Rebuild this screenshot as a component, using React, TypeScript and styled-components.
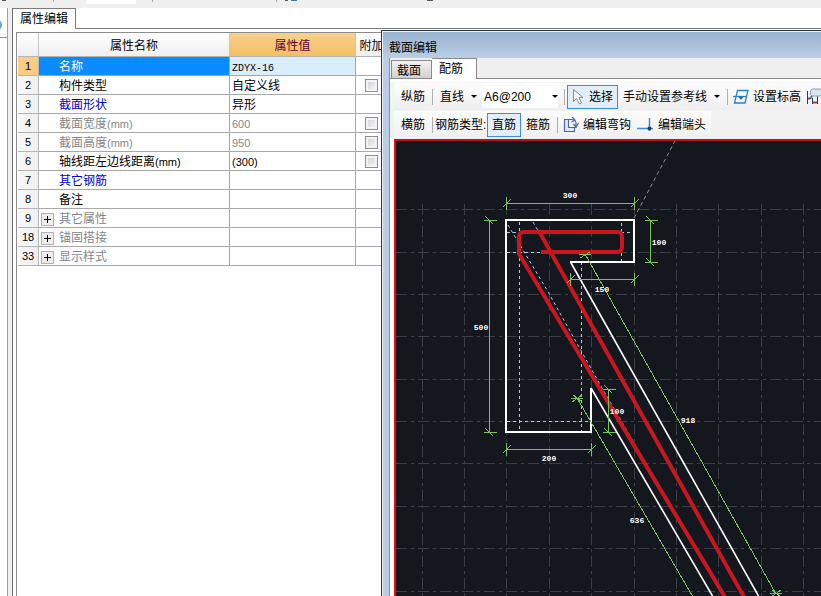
import React from "react";
import styled, { createGlobalStyle, css } from "styled-components";

const Global = createGlobalStyle`
  *, *::before, *::after { box-sizing: border-box; }
  html, body { margin: 0; background: #fff; }
  body, button, select, input {
    font-family: "Liberation Sans", "Noto Sans CJK SC", sans-serif;
    font-size: 12px;
    line-height: 16px;
    color: #000;
  }
  button { margin: 0; padding: 0; border: 0; background: none; }
`;

const Desktop = styled.div`
  position: relative;
  display: flex;
  flex-direction: column;
  height: 100vh;
  overflow: hidden;
`;

const MainToolbar = styled.header`
  flex: none;
  height: 8px;
  background: #efefef;
`;

const Workspace = styled.div`
  flex: 1;
  display: flex;
  min-height: 0;
`;

const LeftDock = styled.aside`
  flex: none;
  width: 8px;
  padding-top: 3px;
  border-right: 1px solid #a0a0a0;
  background: #fff;
`;

const DockHeader = styled.div`
  height: 27px;
  border-bottom: 1px solid #909090;
`;

const Splitter = styled.div`
  flex: none;
  width: 4px;
  background: #f0f0f0;
`;

const PropertyPanel = styled.main`
  flex: 1;
  min-width: 0;
  display: flex;
  flex-direction: column;
  border-left: 1px solid #6e6e6e;
  overflow: hidden;
`;

const PanelTabs = styled.div`
  flex: none;
  display: flex;
  height: 21px;

  &::after {
    content: "";
    flex: 1;
    border-bottom: 1px solid #7c7c7c;
  }
`;

const PanelTab = styled.button`
  padding: 0 7px;
  border-top: 1px solid #7c7c7c;
  border-right: 1px solid #7c7c7c;
`;

const TableFrame = styled.div`
  flex: 1;
  margin: 3px 0 0 3px;
  border-top: 1px solid #8c8c8c;
  border-left: 1px solid #8c8c8c;
`;

const PropertyTable = styled.table`
  width: 370px;
  margin-left: 1px;
  table-layout: fixed;
  border-collapse: separate;
  border-spacing: 0;
`;

const HeadCell = styled.th<{ $active?: boolean; $width: number }>`
  width: ${(p) => p.$width}px;
  height: 24px;
  padding: 2px 0 0;
  border-right: 1px solid #c4c4c4;
  border-bottom: 1px solid #b4b4b4;
  background: linear-gradient(#fff, #efefef);
  font-weight: 400;
  ${(p) =>
    p.$active &&
    css`
      background: linear-gradient(#f7d28a, #f2bf63);
      color: #5e0036;
    `}
`;

type Tone = "normal" | "link" | "muted";
const tones: Record<Tone, string> = { normal: "#000", link: "#0000c8", muted: "#868686" };

const IndexCell = styled.th<{ $active?: boolean }>`
  height: 19px;
  padding: 0;
  border-right: 1px solid #b4b4b4;
  border-bottom: 1px solid #b4b4b4;
  background: ${(p) => (p.$active ? "#fccb86" : "linear-gradient(90deg, #f8f8f8, #efefef)")};
  font-size: 11px;
  font-weight: 400;
`;

const Cell = styled.td<{ $tone?: Tone; $bg?: string }>`
  height: 19px;
  padding: 2px 2px 0;
  border-right: 1px solid #a8a8a8;
  border-bottom: 1px solid #a8a8a8;
  background: ${(p) => p.$bg ?? "#fff"};
  color: ${(p) => tones[p.$tone ?? "normal"]};
  white-space: nowrap;
`;

const NameLine = styled.div<{ $selected?: boolean }>`
  display: grid;
  grid-template-columns: 18px auto;
  align-items: center;
  justify-content: start;
  color: ${(p) => (p.$selected ? "#fff" : "inherit")};
`;

const Latin = styled.span<{ $mono?: boolean }>`
  font-family: ${(p) => (p.$mono ? '"Liberation Mono", monospace' : '"Liberation Sans", sans-serif')};
  font-size: ${(p) => (p.$mono ? 10 : 11)}px;
  line-height: 10px;
`;

const Expander = styled.button`
  display: grid;
  width: 13px;
  height: 13px;
  place-items: center;
  border: 1px solid #b0b0b0;
  background: #eee;
`;

const CheckCell = styled(Cell)`
  padding: 0;
`;

const Check = styled.input`
  appearance: none;
  display: block;
  width: 13px;
  height: 13px;
  margin: 0 auto;
  border: 1px solid #8e8f8f;
  background: linear-gradient(135deg, #d0d0d0, #f8f8f8);
  box-shadow: inset 0 0 0 2px #f4f4f4;
`;

const ToolWindow = styled.section`
  position: absolute;
  left: 381px;
  top: 30px;
  right: 0;
  bottom: 0;
  display: flex;
  flex-direction: column;
  border-top: 1px solid #2c3440;
  border-left: 1px solid #2c3440;
  background: #b9cde5;
  box-shadow: inset 1px 1px 0 #eef4fa;
`;

const WindowTitle = styled.h1`
  flex: none;
  height: 26px;
  margin: 1px 0 0 1px;
  padding: 8px 6px 0;
  background: linear-gradient(#98b2d0, #bacee6);
  font-size: 12px;
  font-weight: 400;
`;

const WindowBody = styled.div`
  flex: 1;
  display: flex;
  flex-direction: column;
  min-height: 0;
  margin-left: 7px;
  border-left: 1px solid #8a929c;
  background: #fff;
`;

const WindowTabs = styled.div`
  flex: none;
  display: flex;
  align-items: stretch;
  height: 21px;
  background: #efefef;

  &::before,
  &::after {
    content: "";
    width: 1px;
    border-bottom: 1px solid #8a8a8a;
  }
  &::after {
    flex: 1;
  }
`;

const WindowTab = styled.button<{ $active?: boolean }>`
  border: 1px solid #8a8a8a;
  ${(p) =>
    p.$active
      ? css`
          padding: 0 13px 0 7px;
          border-left: 0;
          border-bottom: 0;
          background: #fff;
        `
      : css`
          margin-top: 2px;
          padding: 2px 10px 0 5px;
          background: linear-gradient(#f2f2f2, #d0d0d0);
        `}
`;

const Toolbars = styled.div`
  flex: none;
  display: flex;
  flex-direction: column;
  gap: 1px;
  padding: 4px 0 1px 4px;
  overflow: hidden;
  background: linear-gradient(#fff 0 3px, #f6f6f6 3px, #efefef);
`;

const Toolbar = styled.div`
  display: flex;
  align-items: center;
  align-self: flex-start;
  height: 27px;
  padding: 0 2px;
  background: linear-gradient(#fcfcfc, #efefef);
  white-space: nowrap;
`;

const Tool = styled.button<{ $pressed?: boolean; $tight?: boolean; $gap?: number }>`
  flex: none;
  display: flex;
  align-items: center;
  gap: ${(p) => p.$gap ?? 4}px;
  height: 24px;
  padding: 0 ${(p) => (p.$tight ? 2 : 4)}px;
  border: 1px solid ${(p) => (p.$pressed ? "#3a8ee0" : "transparent")};
  background: ${(p) => (p.$pressed ? "#e2effa" : "transparent")};
  white-space: nowrap;
`;

const Divider = styled.span`
  flex: none;
  width: 1px;
  height: 16px;
  margin: 0 2px;
  background: #b0b0b0;
`;

const ToolLabel = styled.span`
  width: 52px;
`;

const Arrow = styled.i`
  flex: none;
  border: solid transparent;
  border-width: 3px 3px 0;
  border-top-color: #000;
`;

const ComboBox = styled.label`
  flex: none;
  display: flex;
  align-items: center;
  width: 76px;
  height: 22px;
  margin-right: 4px;
  background: #fff;
`;

const Combo = styled.select`
  appearance: none;
  flex: 1;
  min-width: 0;
  height: 22px;
  padding: 0 2px;
  border: 0;
  background: none;
`;

const Viewport = styled.div`
  flex: 1;
  min-height: 0;
  margin-left: 4px;
  border-top: 2px solid #b8141c;
  border-left: 2px solid #e01010;
  background: #14171e;
  overflow: hidden;
`;

const Drawing = styled.svg`
  display: block;
  width: 100%;
  height: 100%;
`;

const DimText = styled.text`
  fill: #fff;
  font: bold 8px "Liberation Mono", monospace;
  text-anchor: middle;
`;

const CursorIcon = () => (
  <svg width="13" height="18" viewBox="0 0 13 18">
    <path d="M1.5 1.5v12l3-3 3 5.500 2-1-2.500-5.500h4z" fill="#f4f6f9" stroke="#8d8a8c" />
  </svg>
);

const LevelIcon = () => (
  <svg width="16" height="16" viewBox="0 0 16 16" fill="none" stroke="#2f7fc4" strokeWidth="1.300">
    <path d="M4.500 1.500h10.500l-3 12.500h-10.500z" fill="#f5faff" />
    <path d="M0 7.500h13" />
    <path d="M5 7.500h6l-3 3.500z" fill="#2c6fb0" stroke="none" />
  </svg>
);

const HookIcon = () => (
  <svg width="16" height="16" viewBox="0 0 16 16" fill="none" stroke="#4a68a8" strokeWidth="1.200">
    <path d="M1.500 2.500h4v8h6v4h-10z" fill="#dfeaf8" />
    <path d="M5.500 2.500h3q4 0 4.500 3.500v4.500h-2" />
    <path d="M9 0l3 3-3.500 2M10.500 7l2.500 3 2.500-4" />
  </svg>
);

const EndIcon = () => (
  <svg width="17" height="16" viewBox="0 0 17 16" fill="none">
    <path d="M0 11.500h16M12.500 1v13" stroke="#3d8bd0" strokeWidth="1.500" />
    <circle cx="12.500" cy="11.500" r="2" fill="#16407c" />
  </svg>
);

const SectionIcon = () => (
  <svg width="17" height="17" viewBox="0 0 17 17" fill="none">
    <path d="M.5 3v13M5.500 10v6M10.500 8v8" stroke="#253b60" />
    <path d="M1 10.500h2M6 14.500h4" stroke="#c83030" strokeWidth="2" />
    <rect x="3.500" y="1" width="11" height="7" rx="2" fill="#dce6f2" stroke="#8ba0bd" />
    <path d="M5 8l-2 3" stroke="#5376a4" strokeWidth="2" />
  </svg>
);

const PlusIcon = () => (
  <svg width="9" height="9" viewBox="0 0 9 9">
    <path d="M4.500 1v7M1 4.500h7" stroke="#000" />
  </svg>
);

const ToolbarEdge = () => (
  <svg width="440" height="8" viewBox="0 0 440 8" display="block">
    <path d="M86 0h50v4H86z" fill="#fff" />
    <path d="M53.500 0v2M152.500 0v2M276.500 0v2" stroke="#a8a8a8" />
    <path d="M2 0h4M427 0h6M285 0h3" stroke="#555" strokeWidth="2" />
    <path d="M291 0h6" stroke="#3b79b0" strokeWidth="2" />
  </svg>
);

interface Row {
  id: number;
  name: string;
  unit?: string;
  value?: React.ReactNode;
  tone?: Tone;
  check?: boolean;
  group?: boolean;
}

const rows: Row[] = [
  { id: 1, name: "名称", value: <Latin $mono>ZDYX-16</Latin> },
  { id: 2, name: "构件类型", value: "自定义线", check: true },
  { id: 3, name: "截面形状", value: "异形", tone: "link" },
  { id: 4, name: "截面宽度", unit: "(mm)", value: <Latin>600</Latin>, tone: "muted", check: true },
  { id: 5, name: "截面高度", unit: "(mm)", value: <Latin>950</Latin>, tone: "muted", check: true },
  { id: 6, name: "轴线距左边线距离", unit: "(mm)", value: <Latin>(300)</Latin>, check: true },
  { id: 7, name: "其它钢筋", tone: "link" },
  { id: 8, name: "备注" },
  { id: 9, name: "其它属性", tone: "muted", group: true },
  { id: 18, name: "锚固搭接", tone: "muted", group: true },
  { id: 33, name: "显示样式", tone: "muted", group: true },
];

function PropertyRow({ row }: { row: Row }) {
  const selected = row.id === 1;
  return (
    <tr>
      <IndexCell scope="row" $active={selected}>{row.id}</IndexCell>
      <Cell $tone={row.tone} $bg={selected ? "#0a8cff" : undefined}>
        <NameLine $selected={selected}>
          {row.group ? <Expander aria-label={`展开${row.name}`}><PlusIcon /></Expander> : <span />}
          <span>{row.name}{row.unit && <Latin>{row.unit}</Latin>}</span>
        </NameLine>
      </Cell>
      <Cell $tone={row.tone === "link" ? "normal" : row.tone} $bg={selected ? "#daedfd" : undefined}>
        {row.value}
      </Cell>
      <CheckCell>{row.check && <Check type="checkbox" aria-label={`附加${row.name}`} />}</CheckCell>
    </tr>
  );
}

const gridX = [422, 464, 506, 549, 591, 634, 676, 718, 761, 803];
const gridY = [209, 252, 294, 336, 379, 421, 463, 506, 548, 591];

/* Dimension line with a cross tick and a slash at each end. */
function Dimension({ x1, y1, x2, y2 }: { x1: number; y1: number; x2: number; y2: number }) {
  const horizontal = y1 === y2;
  const tick = (x: number, y: number) =>
    horizontal ? `M${x} ${y - 7}v13M${x - 4} ${y + 4}l8-8` : `M${x - 6} ${y}h13M${x - 4} ${y - 4}l8 8`;
  return <path d={`M${x1} ${y1}L${x2} ${y2}${tick(x1, y1)}${tick(x2, y2)}`} />;
}

const labels: [string, number, number][] = [
  ["300", 570, 198],
  ["100", 659, 245],
  ["150", 602, 292],
  ["500", 481, 330],
  ["200", 549, 461],
  ["100", 617, 414],
  ["918", 688, 423],
  ["636", 637, 523],
];

function SectionDrawing() {
  return (
    <Drawing role="img" aria-label="截面配筋图">
      <g transform="translate(-396 -141)" fill="none">
        <g stroke="#3a3e46" strokeDasharray="11 4 3 4" shapeRendering="crispEdges">
          {gridX.map((x) => <path key={x} d={`M${x + 0.5} 204V2000`} />)}
          {gridY.map((y) => <path key={y} d={`M396 ${y + 0.5}H3000`} />)}
        </g>
        <path d="M634 218L675 141" stroke="#8b908d" strokeDasharray="4 3" />
        <g stroke="#a9cbe6" strokeDasharray="3 3">
          <path d="M519.5 222V431M581.5 262V431M507 421.500H590M507 252.500H542M507 232.500H633M621.500 223V262" />
          <path d="M508 225L547 290L602 388L660 487M533 222L541 236" />
        </g>
        <path d="M570 262H634V220H506V432H591V388" stroke="#fff" strokeWidth="2" />
        <path d="M758.500 596L570.500 262M591 388L712.500 596" stroke="#fff" strokeWidth="1.600" />
        <g stroke="#c9161f" strokeWidth="4">
          <path d="M541 252H617Q622 252 622 247V237Q622 232 617 232H524Q519 232 519 237V254L725 597" />
          <path d="M540 233L744 597" />
        </g>
        <g stroke="#7cc25c" shapeRendering="crispEdges">
          <Dimension x1={506.5} y1={203.5} x2={634.5} y2={203.5} />
          <Dimension x1={489.5} y1={220.5} x2={489.5} y2={432.5} />
          <Dimension x1={650.5} y1={220.5} x2={650.5} y2={262.5} />
          <Dimension x1={570.5} y1={279.5} x2={634.5} y2={279.5} />
          <Dimension x1={506.5} y1={449.5} x2={591.5} y2={449.5} />
          <Dimension x1={608.5} y1={389.5} x2={608.5} y2={432.5} />
          <path d="M585 254L776 594M579 254h12M580 258l10-6M770 593h12M771 597l10-7M772 590l8 6" />
          <path d="M577 398L693 597M571 398h12M572 402l10-7M573 395l8 6" />
        </g>
        {labels.map(([text, x, y]) => <DimText key={`${x}-${y}`} x={x} y={y}>{text}</DimText>)}
      </g>
    </Drawing>
  );
}

export default function App() {
  return (
    <>
      <Global />
      <Desktop>
        <MainToolbar><ToolbarEdge /></MainToolbar>
        <Workspace>
          <LeftDock>
            <DockHeader>
              <svg width="4" height="22" viewBox="0 0 4 22" display="block">
                <circle cx="-4" cy="14" r="5" fill="#dceefa" stroke="#5ca4d8" strokeWidth="2" />
              </svg>
            </DockHeader>
          </LeftDock>
          <Splitter />
          <PropertyPanel>
            <PanelTabs role="tablist">
              <PanelTab role="tab" aria-selected>属性编辑</PanelTab>
            </PanelTabs>
            <TableFrame>
              <PropertyTable>
                <thead>
                  <tr>
                    <HeadCell $width={21} aria-label="序号" />
                    <HeadCell $width={191}>属性名称</HeadCell>
                    <HeadCell $width={126} $active>属性值</HeadCell>
                    <HeadCell $width={32}>附加</HeadCell>
                  </tr>
                </thead>
                <tbody>
                  {rows.map((row) => <PropertyRow key={row.id} row={row} />)}
                </tbody>
              </PropertyTable>
            </TableFrame>
          </PropertyPanel>
        </Workspace>

        <ToolWindow>
          <WindowTitle>截面编辑</WindowTitle>
          <WindowBody>
            <WindowTabs role="tablist">
              <WindowTab role="tab">截面</WindowTab>
              <WindowTab role="tab" $active aria-selected>配筋</WindowTab>
            </WindowTabs>
            <Toolbars>
              <Toolbar role="toolbar">
                <Tool>纵筋</Tool>
                <Divider />
                <Tool $gap={7}>直线<Arrow /></Tool>
                <ComboBox>
                  <Combo aria-label="钢筋规格" defaultValue="A6@200">
                    <option>A6@200</option>
                  </Combo>
                  <Arrow />
                </ComboBox>
                <Divider />
                <Tool $pressed>
                  <CursorIcon />选择
                </Tool>
                <Tool $gap={7}>手动设置参考线<Arrow /></Tool>
                <Divider />
                <Tool $tight><LevelIcon />设置标高</Tool>
                <Tool $tight aria-label="截面标注"><SectionIcon /></Tool>
              </Toolbar>
              <Toolbar role="toolbar">
                <Tool>横筋</Tool>
                <Divider />
                <ToolLabel>钢筋类型:</ToolLabel>
                <Tool $pressed>直筋</Tool>
                <Tool>箍筋</Tool>
                <Divider />
                <Tool $tight><HookIcon />编辑弯钩</Tool>
                <Tool $tight><EndIcon />编辑端头</Tool>
              </Toolbar>
            </Toolbars>
            <Viewport>
              <SectionDrawing />
            </Viewport>
          </WindowBody>
        </ToolWindow>
      </Desktop>
    </>
  );
}
